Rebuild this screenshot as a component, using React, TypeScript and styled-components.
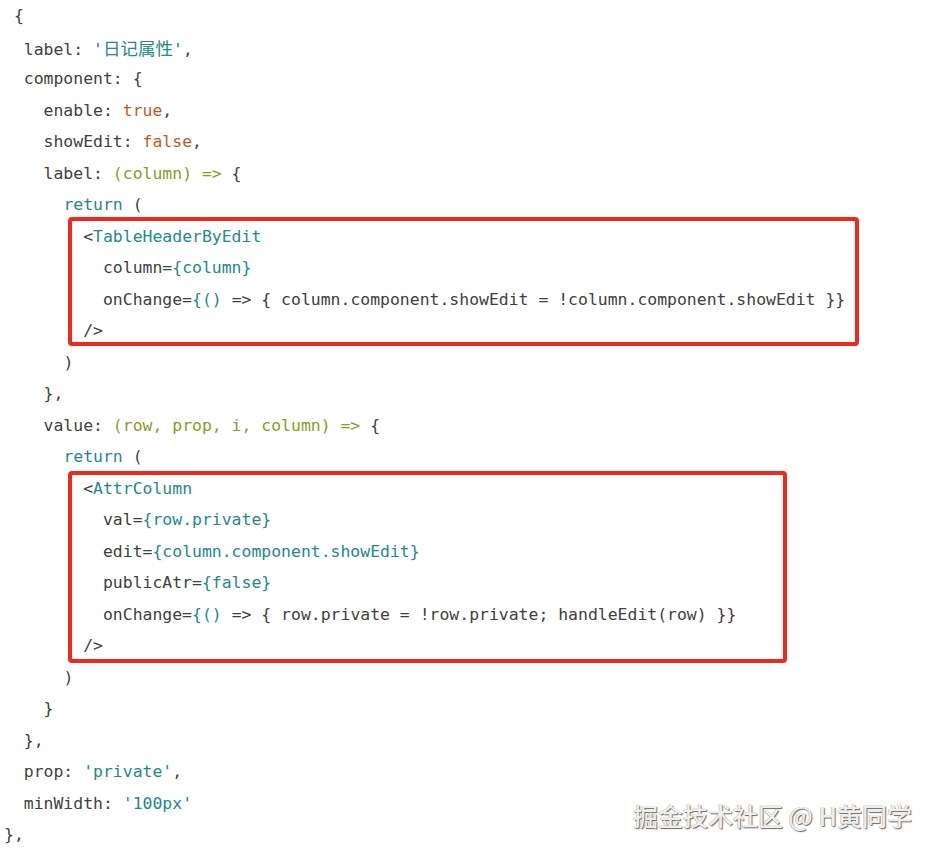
import React from "react";
import styled, { createGlobalStyle } from "styled-components";

const Global = createGlobalStyle`
  html, body { margin: 0; padding: 0; background: #ffffff; }
  #root { width: 936px; }
`;

type Kind = "plain" | "str" | "kw" | "fn";

const colors: Record<Kind, string> = {
  plain: "#404040",
  str: "#23898a",
  kw: "#c05b1e",
  fn: "#8c9a26",
};

const Page = styled.div`
  position: relative;
  width: 936px;
  height: 853px;
  overflow: hidden;
  background: #ffffff;
`;

const Code = styled.div`
  display: flex;
  flex-direction: column;
  padding-left: 4px;
  font-family: "DejaVu Sans Mono", "Liberation Mono", "Noto Sans CJK SC", monospace;
  font-size: 16.45px;
  color: ${colors.plain};
`;

const Line = styled.div<{ $indent: number }>`
  height: 31.5px;
  line-height: 31.5px;
  white-space: pre;
  padding-left: ${(p) => p.$indent}ch;
`;

const Tok = styled.span<{ $k: Kind }>`
  color: ${(p) => colors[p.$k]};
`;

const Cjk = styled.span`
  font-family: "Noto Sans CJK SC", sans-serif;
  font-size: 17.5px;
`;

const Group = styled.div`
  position: relative;
  display: flex;
  flex-direction: column;
`;

const Frame = styled.div<{ $top: number; $bottom: number; $width: number }>`
  position: absolute;
  left: 64px;
  top: ${(p) => p.$top}px;
  bottom: ${(p) => p.$bottom}px;
  width: ${(p) => p.$width}px;
  box-sizing: border-box;
  border: 4.5px solid #ee2a1f;
  border-radius: 4px;
  pointer-events: none;
`;

const Watermark = styled.div`
  position: absolute;
  right: 24px;
  bottom: 22px;
  font-family: "Noto Sans CJK SC", "Noto Sans", sans-serif;
  font-size: 25px;
  font-weight: 500;
  line-height: 32px;
  color: #eeeeee;
  text-shadow: 1px 1px 1px #6a6a6a, -0.5px -0.5px 0 #b0b0b0;
  white-space: pre;
`;

type T = [Kind, string];
type LineData = { indent: number; toks: T[]; special?: boolean };
const L = (indent: number, ...toks: T[]): LineData => ({ indent, toks });

const before: LineData[] = [
  L(1, ["plain", "{"]),
  { indent: 2, toks: [], special: true },
  L(2, ["plain", "component: {"]),
  L(4, ["plain", "enable: "], ["kw", "true"], ["plain", ","]),
  L(4, ["plain", "showEdit: "], ["kw", "false"], ["plain", ","]),
  L(4, ["plain", "label: "], ["fn", "(column) =>"], ["plain", " {"]),
  L(6, ["str", "return"], ["plain", " ("]),
];

const box1: LineData[] = [
  L(8, ["plain", "<"], ["str", "TableHeaderByEdit"]),
  L(10, ["plain", "column="], ["str", "{column}"]),
  L(
    10,
    ["plain", "onChange="],
    ["str", "{()"],
    ["plain", " => { column.component.showEdit = !column.component.showEdit }}"]
  ),
  L(8, ["plain", "/>"]),
];

const middle: LineData[] = [
  L(6, ["plain", ")"]),
  L(4, ["plain", "},"]),
  L(4, ["plain", "value: "], ["fn", "(row, prop, i, column) =>"], ["plain", " {"]),
  L(6, ["str", "return"], ["plain", " ("]),
];

const box2: LineData[] = [
  L(8, ["plain", "<"], ["str", "AttrColumn"]),
  L(10, ["plain", "val="], ["str", "{row.private}"]),
  L(10, ["plain", "edit="], ["str", "{column.component.showEdit}"]),
  L(10, ["plain", "publicAtr="], ["str", "{false}"]),
  L(
    10,
    ["plain", "onChange="],
    ["str", "{()"],
    ["plain", " => { row.private = !row.private; handleEdit(row) }}"]
  ),
  L(8, ["plain", "/>"]),
];

const after: LineData[] = [
  L(6, ["plain", ")"]),
  L(4, ["plain", "}"]),
  L(2, ["plain", "},"]),
  L(2, ["plain", "prop: "], ["str", "'private'"], ["plain", ","]),
  L(2, ["plain", "minWidth: "], ["str", "'100px'"]),
  L(0, ["plain", "},"]),
];

const renderLines = (lines: LineData[], prefix: string) =>
  lines.map((l, i) =>
    l.special ? (
      <Line key={prefix + i} $indent={l.indent}>
        label: <Tok $k="str">'<Cjk>日记属性</Cjk>'</Tok>,
      </Line>
    ) : (
      <Line key={prefix + i} $indent={l.indent}>
        {l.toks.map(([k, s], j) => (
          <Tok key={j} $k={k}>
            {s}
          </Tok>
        ))}
      </Line>
    )
  );

export default function App() {
  return (
    <Page>
      <Global />
      <Code>
        {renderLines(before, "a")}
        <Group>
          {renderLines(box1, "b")}
          <Frame $top={-3.5} $bottom={0.5} $width={791} />
        </Group>
        {renderLines(middle, "c")}
        <Group>
          {renderLines(box2, "d")}
          <Frame $top={-1.5} $bottom={-1} $width={719} />
        </Group>
        {renderLines(after, "e")}
      </Code>
      <Watermark>掘金技术社区 @ H黄同学</Watermark>
    </Page>
  );
}
